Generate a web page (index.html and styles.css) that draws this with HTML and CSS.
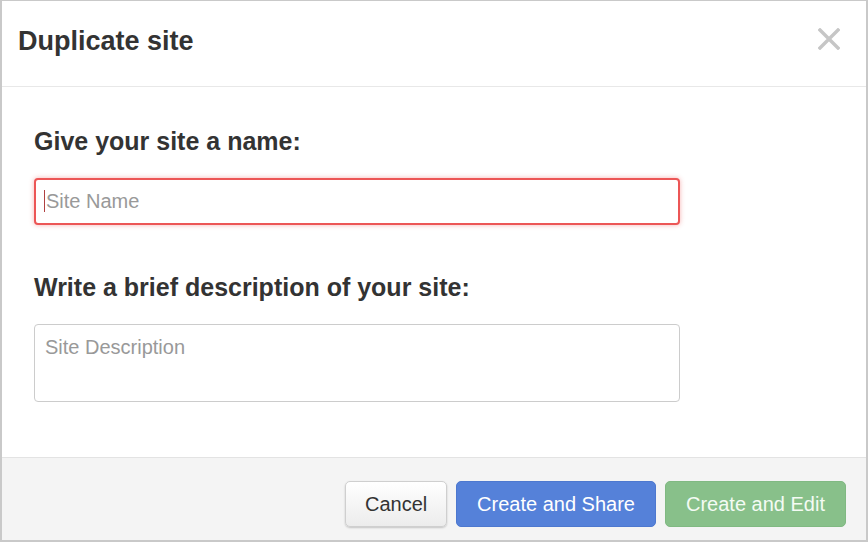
FILE: index.html
```html
<!DOCTYPE html>
<html lang="en">
<head>
    <meta charset="UTF-8">
    <meta name="viewport" content="width=device-width, initial-scale=1.0">
    <title>Duplicate site</title>
    <link rel="stylesheet" href="styles.css">
</head>
<body>
    <div class="modal">
        <div class="modal-header">
            <h1 class="modal-title">Duplicate site</h1>
            <button class="close" aria-label="Close">
                <svg width="22" height="22" viewBox="0 0 22 22">
                    <path d="M2 2 L20 20 M20 2 L2 20" stroke="#c6c6c6" stroke-width="3.4" stroke-linecap="square" fill="none"/>
                </svg>
            </button>
        </div>
        <div class="modal-body">
            <label class="field-label" for="siteName">Give your site a name:</label>
            <div class="input-wrap">
                <input type="text" id="siteName" class="field field-error" placeholder="Site Name">
                <span class="caret"></span>
            </div>
            <label class="field-label" for="siteDesc">Write a brief description of your site:</label>
            <textarea id="siteDesc" class="field field-area" placeholder="Site Description"></textarea>
        </div>
        <div class="modal-footer">
            <button class="btn btn-default">Cancel</button>
            <button class="btn btn-primary">Create and Share</button>
            <button class="btn btn-success">Create and Edit</button>
        </div>
    </div>
</body>
</html>
```

FILE: styles.css
```css
 * {
     box-sizing: border-box;
 }
 body {
     margin: 0;
     font-family: "Liberation Sans", Arial, sans-serif;
     background-color: #fff;
 }
 .modal {
     width: 868px;
     height: 542px;
     border: 2px solid #c9c9c9;
     border-top-width: 1px;
     display: flex;
     flex-direction: column;
     background: #fff;
 }
 .modal-header {
     height: 86px;
     display: flex;
     justify-content: space-between;
     align-items: center;
     padding: 0 26px 4px 16px;
     border-bottom: 1px solid #e8e8e8;
 }
 .modal-title {
     margin: 0;
     font-size: 27px;
     font-weight: bold;
     color: #333;
 }
 .close {
     border: none;
     background: none;
     padding: 0;
     width: 22px;
     height: 22px;
     margin-bottom: 6px;
     cursor: pointer;
 }
 .modal-body {
     flex: 1;
     padding: 42px 0 0 32px;
 }
 .field-label {
     display: block;
     font-size: 25px;
     line-height: 24px;
     font-weight: bold;
     color: #333;
     margin-bottom: 25px;
 }
 .input-wrap {
     position: relative;
     width: 647px;
     margin-bottom: 50px;
 }
 .field {
     display: block;
     width: 646px;
     font-family: "Liberation Sans", Arial, sans-serif;
     font-size: 20px;
     color: #333;
     border: 1px solid #ccc;
     border-radius: 4px;
     padding: 0 10px;
     outline: none;
 }
 .field::placeholder {
     color: #999;
 }
 .field-error {
     height: 47px;
     border: 2px solid #ec5656;
     box-shadow: 0 0 5px rgba(236, 86, 86, 0.45);
 }
 .caret {
     position: absolute;
     left: 10px;
     top: 12px;
     width: 1px;
     height: 22px;
     background: #b04040;
 }
 .field-area {
     height: 78px;
     padding: 10px 10px;
     resize: none;
     line-height: 24px;
 }
 .modal-footer {
     height: 83px;
     background: #f4f4f4;
     border-top: 1px solid #e3e3e3;
     display: flex;
     justify-content: flex-end;
     align-items: center;
     gap: 9px;
     padding: 10px 20px 0 0;
 }
 .btn {
     height: 46px;
     font-family: "Liberation Sans", Arial, sans-serif;
     font-size: 20px;
     border-radius: 5px;
     border: 1px solid transparent;
     padding: 0 19px;
     cursor: pointer;
 }
 .btn-default {
     width: 102px;
     color: #333;
     background: linear-gradient(#ffffff, #ececec);
     border-color: #cfcfcf;
     box-shadow: 0 1px 2px rgba(0, 0, 0, 0.2);
 }
 .btn-primary {
     width: 200px;
     color: #fff;
     background: #5581d9;
     border-color: #4d78cf;
 }
 .btn-success {
     width: 181px;
     color: #f4fbf4;
     background: #88c08a;
     border-color: #80b982;
 }
```
